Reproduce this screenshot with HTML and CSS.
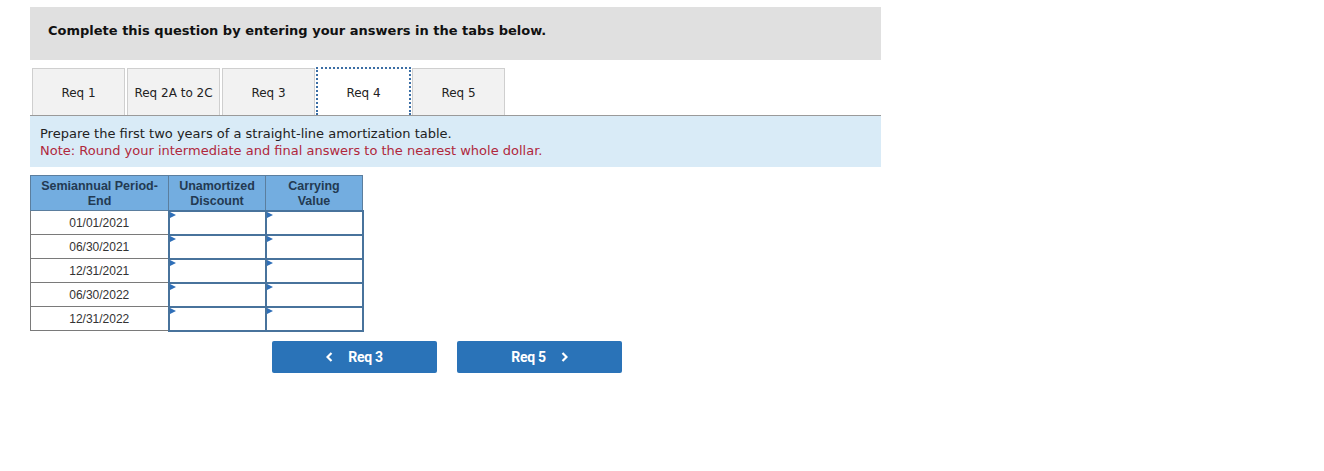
FILE: index.html
```html
<!DOCTYPE html>
<html lang="en">
<head>
  <meta charset="UTF-8" />
  <title>Req 4</title>
  <link rel="stylesheet" href="styles.css">
</head>
<body>
  <div class="question">
    <div class="instructions">Complete this question by entering your answers in the tabs below.</div>
    <div class="tabs">
      <div class="tab">Req 1</div>
      <div class="tab">Req 2A to 2C</div>
      <div class="tab">Req 3</div>
      <div class="tab active">Req 4</div>
      <div class="tab">Req 5</div>
    </div>
    <div class="prompt">
      Prepare the first two years of a straight-line amortization table.<br />
      <span class="note">Note: Round your intermediate and final answers to the nearest whole dollar.</span>
    </div>
    <table class="amort">
      <thead>
        <tr>
          <th class="col-date">Semiannual Period-<br />End</th>
          <th class="col-input">Unamortized<br />Discount</th>
          <th class="col-input">Carrying<br />Value</th>
        </tr>
      </thead>
      <tbody>
        <tr><td>01/01/2021</td><td class="entry"></td><td class="entry"></td></tr>
        <tr><td>06/30/2021</td><td class="entry"></td><td class="entry"></td></tr>
        <tr><td>12/31/2021</td><td class="entry"></td><td class="entry"></td></tr>
        <tr><td>06/30/2022</td><td class="entry"></td><td class="entry"></td></tr>
        <tr><td>12/31/2022</td><td class="entry"></td><td class="entry"></td></tr>
      </tbody>
    </table>
    <div class="nav">
      <button class="nav-btn">
        <svg class="chev" width="7" height="10" viewBox="0 0 7 10"><polyline points="5.5,1 1.5,5 5.5,9" fill="none" stroke="#fff" stroke-width="2.2"/></svg>
        Req 3
      </button>
      <button class="nav-btn">
        Req 5
        <svg class="chev right" width="7" height="10" viewBox="0 0 7 10"><polyline points="1.5,1 5.5,5 1.5,9" fill="none" stroke="#fff" stroke-width="2.2"/></svg>
      </button>
    </div>
  </div>
</body>
</html>
```

FILE: styles.css
```css
body {
  margin: 0;
  background: #fff;
  font-family: Verdana, 'DejaVu Sans', sans-serif;
  color: #222;
}
.question {
  width: 851px;
  margin: 7px 0 0 30px;
}
.instructions {
  background: #e0e0e0;
  height: 53px;
  box-sizing: border-box;
  padding: 16px 18px 0;
  font-size: 13px;
  font-weight: bold;
  color: #111;
}
.tabs {
  display: flex;
  gap: 2px;
  margin-top: 8px;
  padding-left: 2px;
  border-bottom: 1px solid #9a9a9a;
}
.tab {
  width: 93px;
  height: 47px;
  box-sizing: border-box;
  background: #f2f2f2;
  border: 1px solid #cfcfcf;
  border-bottom: none;
  display: flex;
  align-items: center;
  justify-content: center;
  padding-top: 2px;
  font-size: 12px;
  color: #222;
}
.tab.active {
  background: #fff;
  border: 2px dotted #3b6ea5;
  border-bottom: none;
  margin-top: -1px;
  height: 48px;
  width: 95px;
  margin-left: -1px;
  margin-right: -1px;
}
.prompt {
  background: #d9ebf7;
  height: 51px;
  box-sizing: border-box;
  padding: 9px 10px 0;
  font-size: 13px;
  line-height: 17px;
  color: #222;
}
.note {
  color: #b0283c;
}
.amort {
  margin-top: 8px;
  border-collapse: collapse;
  font-family: Arial, 'Liberation Sans', sans-serif;
  font-size: 12px;
}
.amort th {
  background: #73ade0;
  color: #233a52;
  font-weight: bold;
  font-size: 12.5px;
  line-height: 15px;
  height: 35px;
  box-sizing: border-box;
  border: 1px solid #5b7e9e;
  padding: 2px 4px 0;
  vertical-align: middle;
}
.col-date {
  width: 138px;
}
.col-input {
  width: 97px;
}
.amort td {
  height: 24px;
  box-sizing: border-box;
  border: 1px solid #7a7a7a;
  text-align: center;
  color: #333;
  padding: 0;
}
.amort td.entry {
  border: 2px solid #48739c;
  position: relative;
}
.amort td.entry::before {
  content: "";
  position: absolute;
  left: 0;
  top: 0;
  border-left: 6px solid #2f6fb8;
  border-top: 3px solid transparent;
  border-bottom: 3px solid transparent;
}
.nav {
  display: flex;
  gap: 20px;
  margin: 9px 0 0 242px;
}
.nav-btn {
  width: 165px;
  height: 32px;
  background: #2a73b8;
  color: #fff;
  border: none;
  border-radius: 2px;
  font-family: Roboto, 'Liberation Sans', sans-serif;
  font-weight: bold;
  font-size: 14px;
  letter-spacing: -0.3px;
  display: flex;
  align-items: center;
  justify-content: center;
}
.chev {
  margin-right: 15px;
}
.chev.right {
  margin-right: 0;
  margin-left: 15px;
}
```
